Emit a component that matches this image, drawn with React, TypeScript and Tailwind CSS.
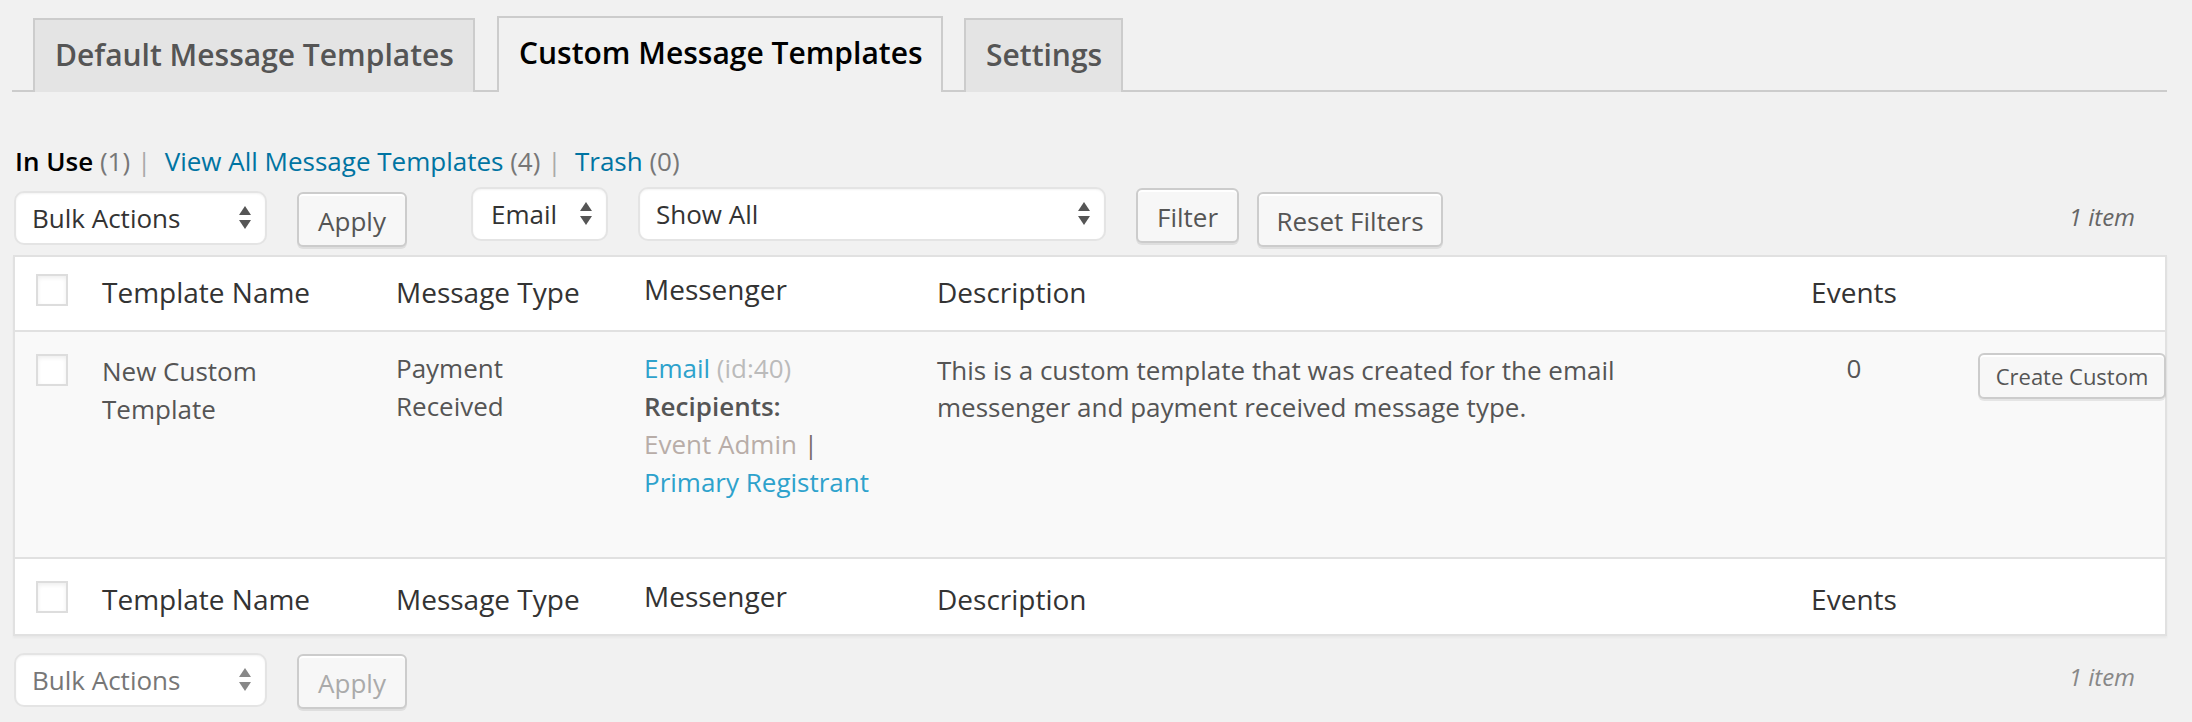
import React from "react";

function Arrows({ color = "#555555" }: { color?: string }) {
  return (
    <svg width="12" height="24" viewBox="0 0 12 24" className="shrink-0">
      <path d="M6 0 L12 9 L0 9 Z" fill={color} />
      <path d="M0 14 L12 14 L6 23 Z" fill={color} />
    </svg>
  );
}

function Checkbox() {
  return (
    <div className="w-[32px] h-[32px] border-2 border-[#dddddd] bg-white shadow-[inset_0_2px_4px_rgba(0,0,0,0.07)]" />
  );
}

const cols = "grid grid-cols-[87px_294px_248px_293px_823px_188px_1fr]";

function HeadRow({ footer }: { footer?: boolean }) {
  return (
    <div
      className={`${cols} bg-white text-[28px] leading-[38px] text-[#333333] ${
        footer ? "pt-[21px] pb-[16px]" : "pt-[16px] pb-[19px] border-b-2 border-[#e1e1e1]"
      }`}
    >
      <div className="pl-[21px] pt-[1px]">
        <Checkbox />
      </div>
      <div>Template Name</div>
      <div>Message Type</div>
      <div className="-mt-[3px]">Messenger</div>
      <div>Description</div>
      <div className="text-center">Events</div>
      <div />
    </div>
  );
}

function Select({
  w,
  label,
  pl,
  faded,
}: {
  w: string;
  label: string;
  pl: string;
  faded?: boolean;
}) {
  return (
    <div
      className={`${w} ${pl} h-[54px] pr-[14px] flex items-center justify-between bg-white border-2 border-[#e4e4e4] rounded-[10px] shadow-[inset_0_1px_2px_rgba(0,0,0,0.05)] text-[26px] ${
        faded ? "text-[#777777]" : "text-[#333333]"
      }`}
    >
      <span>{label}</span>
      <Arrows color={faded ? "#888888" : "#555555"} />
    </div>
  );
}

function Btn({
  w,
  label,
  faded,
  extra = "",
}: {
  w: string;
  label: string;
  faded?: boolean;
  extra?: string;
}) {
  return (
    <div
      className={`${w} ${extra} h-[55px] flex items-center justify-center pt-[3px] bg-[#f7f7f7] border-2 border-[#cccccc] rounded-[6px] shadow-[inset_0_2px_0_#ffffff,0_2px_0_rgba(0,0,0,0.08)] text-[26px] ${
        faded ? "text-[#aaaaaa]" : "text-[#555555]"
      }`}
    >
      {label}
    </div>
  );
}

const tabBase =
  "border-2 border-b-0 border-[#cccccc] pl-[20px] pt-[15px] text-[30px] leading-[40px] font-semibold whitespace-nowrap overflow-visible -mb-[2px]";

export default function App() {
  return (
    <div className="w-[2192px] h-[722px] bg-[#f1f1f1] font-['Open_Sans','Noto_Sans',sans-serif] overflow-hidden pt-[16px] pl-[12px] pr-[25px]">
      {/* Tabs */}
      <div className="flex items-end border-b-2 border-[#cccccc] pl-[21px] h-[76px]">
        <div className={`${tabBase} h-[74px] w-[442px] bg-[#e4e4e4] text-[#555555]`}>
          Default Message Templates
        </div>
        <div className={`${tabBase} h-[76px] w-[446px] ml-[22px] bg-[#f1f1f1] text-black`}>
          Custom Message Templates
        </div>
        <div className={`${tabBase} h-[74px] w-[159px] ml-[21px] bg-[#e4e4e4] text-[#555555]`}>
          Settings
        </div>
      </div>

      {/* Sub links */}
      <div className="mt-[50px] pl-[3px] h-[38px] text-[26px] leading-[38px] text-[#666666] flex items-center whitespace-pre">
        <span className="font-semibold text-black">In Use</span>
        <span className="text-[#777777]"> (1) </span>
        <span className="text-[#aaaaaa]">|</span>
        <span className="text-[#0074a2]">  View All Message Templates</span>
        <span className="text-[#777777]"> (4) </span>
        <span className="text-[#aaaaaa]">|</span>
        <span className="text-[#0074a2]">  Trash</span>
        <span className="text-[#777777]"> (0)</span>
      </div>

      {/* Top controls */}
      <div className="mt-[7px] pl-[2px] h-[60px] flex items-start">
        <div className="mt-[4px]">
          <Select w="w-[253px]" label="Bulk Actions" pl="pl-[16px]" />
        </div>
        <Btn w="w-[110px]" label="Apply" extra="ml-[30px] mt-[5px]" />
        <div className="ml-[64px]">
          <Select w="w-[137px]" label="Email" pl="pl-[18px]" />
        </div>
        <div className="ml-[30px]">
          <Select w="w-[468px]" label="Show All" pl="pl-[16px]" />
        </div>
        <Btn w="w-[103px]" label="Filter" extra="ml-[30px] mt-[1px]" />
        <Btn w="w-[186px]" label="Reset Filters" extra="ml-[18px] mt-[5px]" />
        <div className="ml-auto mr-[32px] mt-[11px] text-[24px] leading-[38px] italic text-[#666666]">
          1 item
        </div>
      </div>

      {/* Table */}
      <div className="mt-[8px] ml-[1px] border-2 border-[#e1e1e1] shadow-[0_2px_2px_rgba(0,0,0,0.04)]">
        <HeadRow />
        <div className={`${cols} bg-[#f9f9f9] h-[227px] border-b-2 border-[#e1e1e1] text-[26px] leading-[38px] text-[#555555]`}>
          <div className="pl-[21px] pt-[22px]">
            <Checkbox />
          </div>
          <div className="pt-[20px]">
            New Custom
            <br />
            Template
          </div>
          <div className="pt-[17px]">
            Payment
            <br />
            Received
          </div>
          <div className="pt-[17px]">
            <div>
              <span className="text-[#2ea2cc]">Email</span>
              <span className="text-[#bbbbbb]"> (id:40)</span>
            </div>
            <div className="font-semibold text-[#555555]">Recipients:</div>
            <div>
              <span className="text-[#b8ada8]">Event Admin</span>
              <span className="text-[#7a6f6a]"> |</span>
            </div>
            <div className="text-[#2ea2cc]">Primary Registrant</div>
          </div>
          <div className="pt-[20px]">
            <div className="w-[720px] leading-[37px]">
              This is a custom template that was created for the email messenger and payment received message type.
            </div>
          </div>
          <div className="pt-[17px] text-center">0</div>
          <div className="pt-[21px] pl-[30px]">
            <div className="w-[188px] h-[46px] flex items-center justify-center bg-[#f7f7f7] border-2 border-[#cccccc] rounded-[6px] shadow-[inset_0_2px_0_#ffffff,0_2px_0_rgba(0,0,0,0.08)] text-[22px] text-[#555555]">
              Create Custom
            </div>
          </div>
        </div>
        <HeadRow footer />
      </div>

      {/* Bottom controls */}
      <div className="mt-[17px] pl-[2px] h-[60px] flex items-start">
        <Select w="w-[253px]" label="Bulk Actions" pl="pl-[16px]" faded />
        <Btn w="w-[110px]" label="Apply" faded extra="ml-[30px] mt-[1px]" />
        <div className="ml-auto mr-[32px] mt-[5px] text-[24px] leading-[38px] italic text-[#888888]">
          1 item
        </div>
      </div>
    </div>
  );
}
